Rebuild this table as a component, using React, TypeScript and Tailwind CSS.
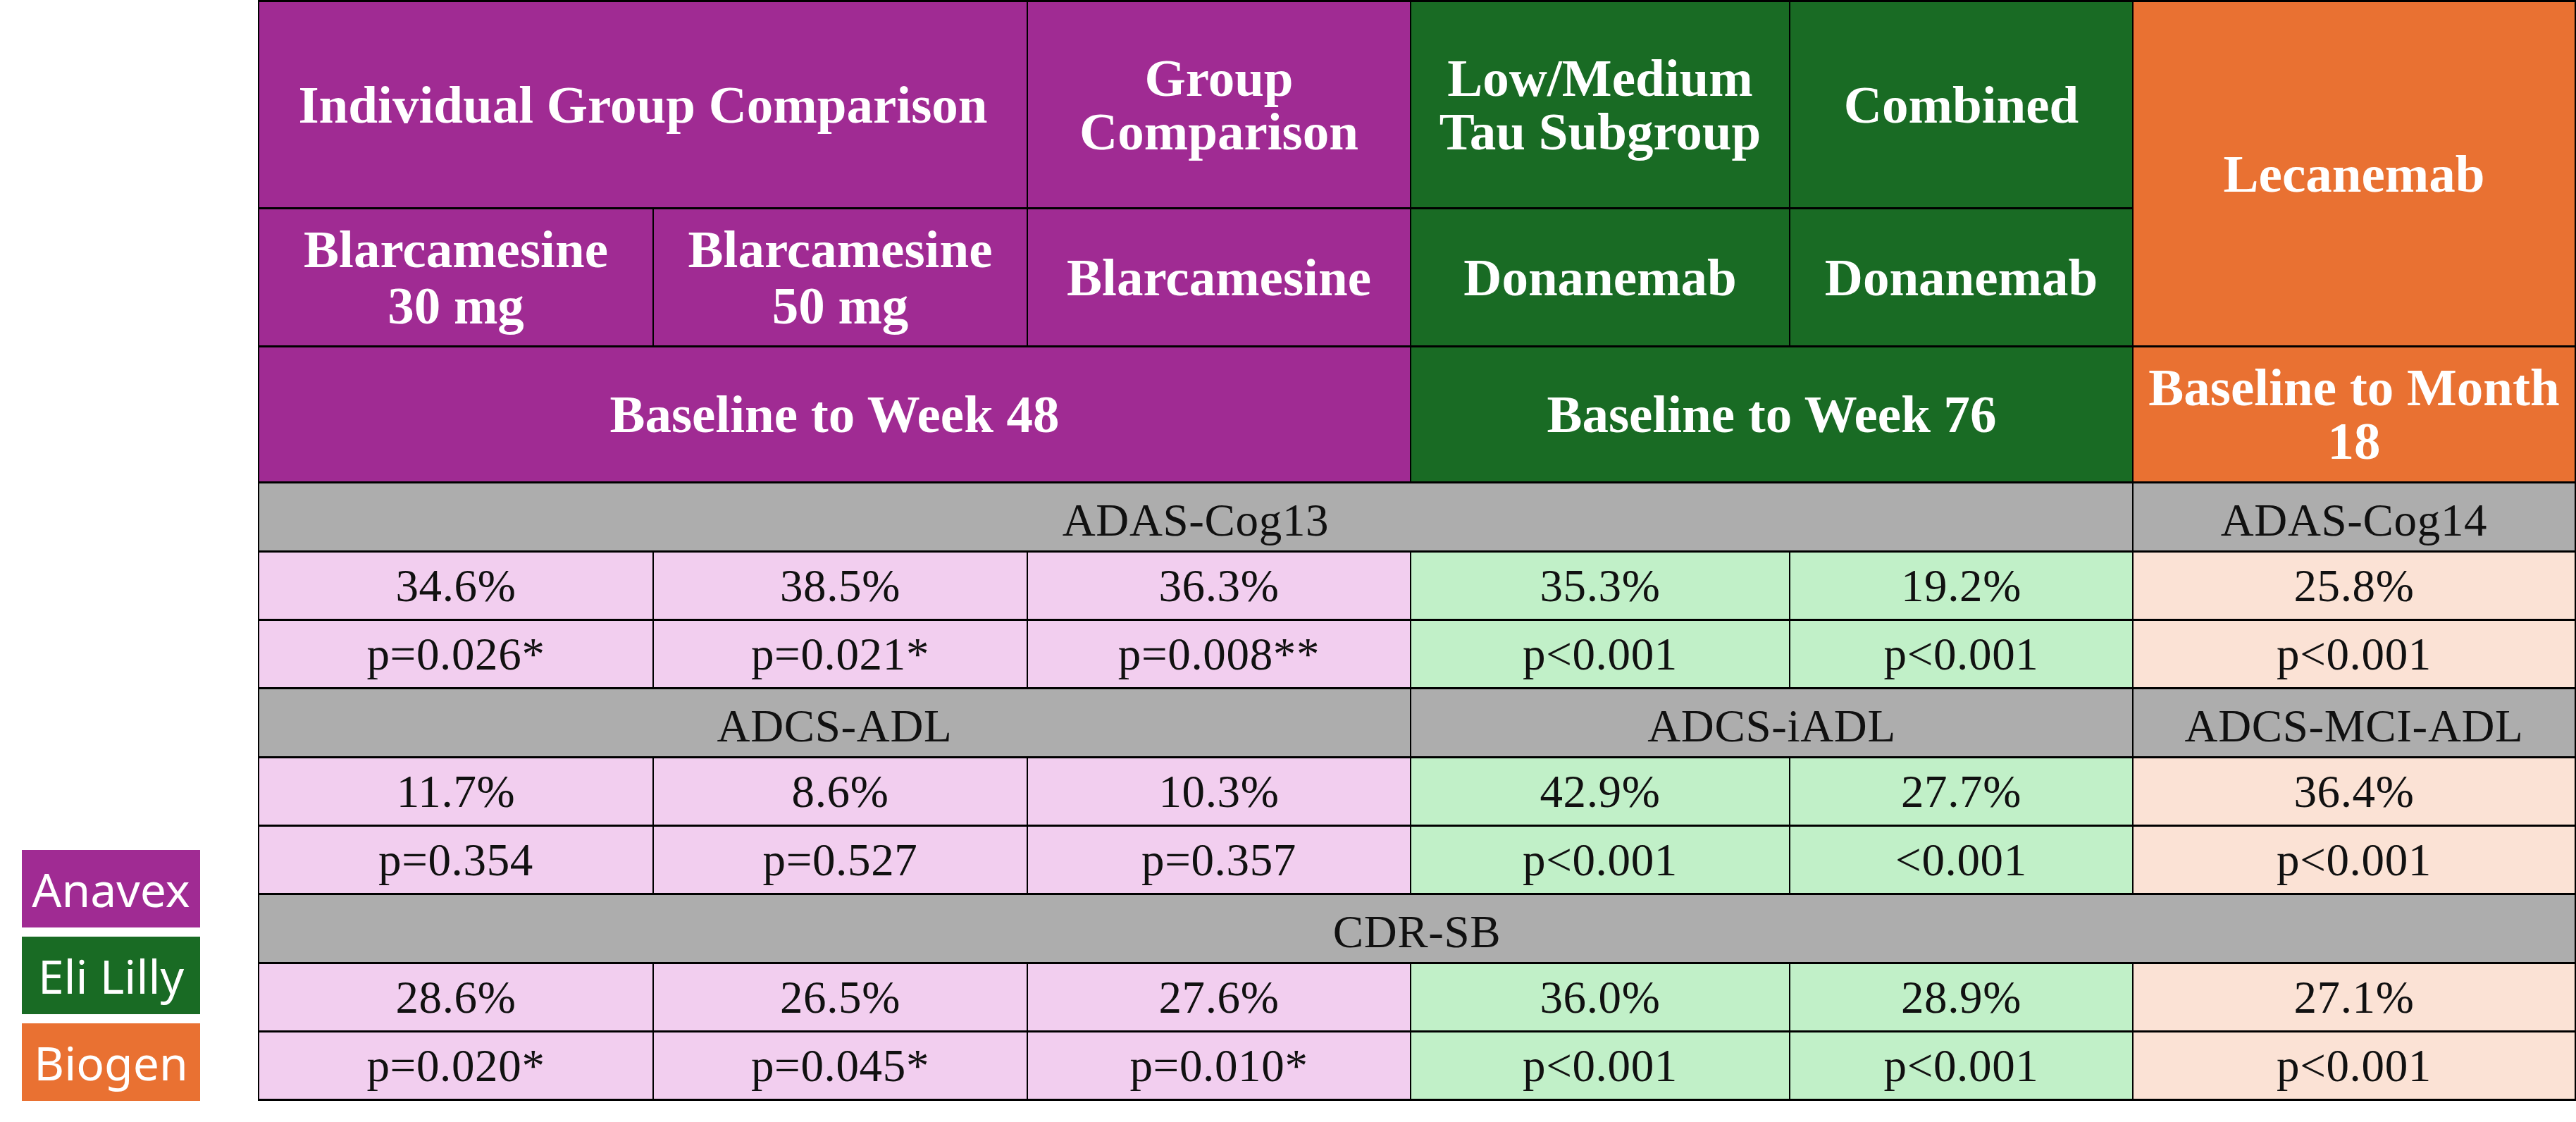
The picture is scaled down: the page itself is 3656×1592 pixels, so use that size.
import React from 'react';

const serif = { fontFamily: '"Liberation Serif", "Times New Roman", serif' };

type DataRow = { values: string[] };

const sections: { labels: { text: string; span: number }[]; rows: DataRow[] }[] = [
  {
    labels: [
      { text: 'ADAS-Cog13', span: 5 },
      { text: 'ADAS-Cog14', span: 1 },
    ],
    rows: [
      { values: ['34.6%', '38.5%', '36.3%', '35.3%', '19.2%', '25.8%'] },
      { values: ['p=0.026*', 'p=0.021*', 'p=0.008**', 'p<0.001', 'p<0.001', 'p<0.001'] },
    ],
  },
  {
    labels: [
      { text: 'ADCS-ADL', span: 3 },
      { text: 'ADCS-iADL', span: 2 },
      { text: 'ADCS-MCI-ADL', span: 1 },
    ],
    rows: [
      { values: ['11.7%', '8.6%', '10.3%', '42.9%', '27.7%', '36.4%'] },
      { values: ['p=0.354', 'p=0.527', 'p=0.357', 'p<0.001', '<0.001', 'p<0.001'] },
    ],
  },
  {
    labels: [{ text: 'CDR-SB', span: 6 }],
    rows: [
      { values: ['28.6%', '26.5%', '27.6%', '36.0%', '28.9%', '27.1%'] },
      { values: ['p=0.020*', 'p=0.045*', 'p=0.010*', 'p<0.001', 'p<0.001', 'p<0.001'] },
    ],
  },
];

// pink for Anavex columns, mint for Eli Lilly, peach for Biogen
const cellTint = (col: number) =>
  col < 3 ? 'bg-[#F2CEEF]' : col < 5 ? 'bg-[#C1F0C8]' : 'bg-[#FBE2D5]';

const head = 'border-x-2 border-y-[3px] border-black text-center align-middle font-bold text-white text-[75px] leading-[76px] px-2';
const cell = 'border-x-2 border-y-[3px] border-black text-center align-middle text-[65px] leading-none tracking-[0.01em] text-[#111]';

function Legend() {
  const items = [
    { name: 'Anavex', bg: 'bg-[#A02B93]' },
    { name: 'Eli Lilly', bg: 'bg-[#196B24]' },
    { name: 'Biogen', bg: 'bg-[#E97132]' },
  ];
  return (
    <div className="flex w-[366px] shrink-0 flex-col gap-[13px] pb-[4px] pl-[31px]">
      {items.map((item) => (
        <div
          key={item.name}
          className={`flex h-[110px] w-[253px] items-center justify-center text-[66px] text-white ${item.bg}`}
          style={{ fontFamily: '"Noto Sans", "Open Sans", sans-serif' }}
        >
          {item.name}
        </div>
      ))}
    </div>
  );
}

export default function App() {
  return (
    <div className="flex h-[1592px] w-[3656px] items-start bg-white">
      <div className="flex h-[1566px] items-end">
        <Legend />
      </div>
      <table className="w-[3288px] table-fixed border-collapse" style={serif}>
        <colgroup>
          <col className="w-[560px]" />
          <col className="w-[531px]" />
          <col className="w-[544px]" />
          <col className="w-[538px]" />
          <col className="w-[487px]" />
          <col className="w-[628px]" />
        </colgroup>
        <thead>
          <tr className="h-[294px]">
            <th colSpan={2} className={`${head} bg-[#A02B93]`}>
              Individual Group Comparison
            </th>
            <th className={`${head} bg-[#A02B93]`}>
              Group
              <br />
              Comparison
            </th>
            <th className={`${head} bg-[#196B24]`}>
              Low/Medium
              <br />
              Tau Subgroup
            </th>
            <th className={`${head} bg-[#196B24]`}>Combined</th>
            <th rowSpan={2} className={`${head} bg-[#E97132]`}>
              Lecanemab
            </th>
          </tr>
          <tr className="h-[196px]">
            <th className={`${head} bg-[#A02B93] leading-[80px]`}>
              Blarcamesine
              <br />
              30 mg
            </th>
            <th className={`${head} bg-[#A02B93] leading-[80px]`}>
              Blarcamesine
              <br />
              50 mg
            </th>
            <th className={`${head} bg-[#A02B93]`}>Blarcamesine</th>
            <th className={`${head} bg-[#196B24]`}>Donanemab</th>
            <th className={`${head} bg-[#196B24]`}>Donanemab</th>
          </tr>
          <tr className="h-[193px]">
            <th colSpan={3} className={`${head} bg-[#A02B93]`}>
              Baseline to Week 48
            </th>
            <th colSpan={2} className={`${head} bg-[#196B24]`}>
              Baseline to Week 76
            </th>
            <th className={`${head} bg-[#E97132] px-0 leading-[72px]`}>
              Baseline to Month
              <br />
              18
            </th>
          </tr>
        </thead>
        <tbody>
          {sections.map((section) => (
            <React.Fragment key={section.labels[0].text}>
              <tr className="h-[98px]">
                {section.labels.map((label) => (
                  <td key={label.text} colSpan={label.span} className={`${cell} bg-[#ADADAD] pt-[10px]`}>
                    {label.text}
                  </td>
                ))}
              </tr>
              {section.rows.map((row, r) => (
                <tr key={r} className="h-[97px]">
                  {row.values.map((v, c) => (
                    <td key={c} className={`${cell} ${cellTint(c)}`}>
                      {v}
                    </td>
                  ))}
                </tr>
              ))}
            </React.Fragment>
          ))}
        </tbody>
      </table>
    </div>
  );
}
